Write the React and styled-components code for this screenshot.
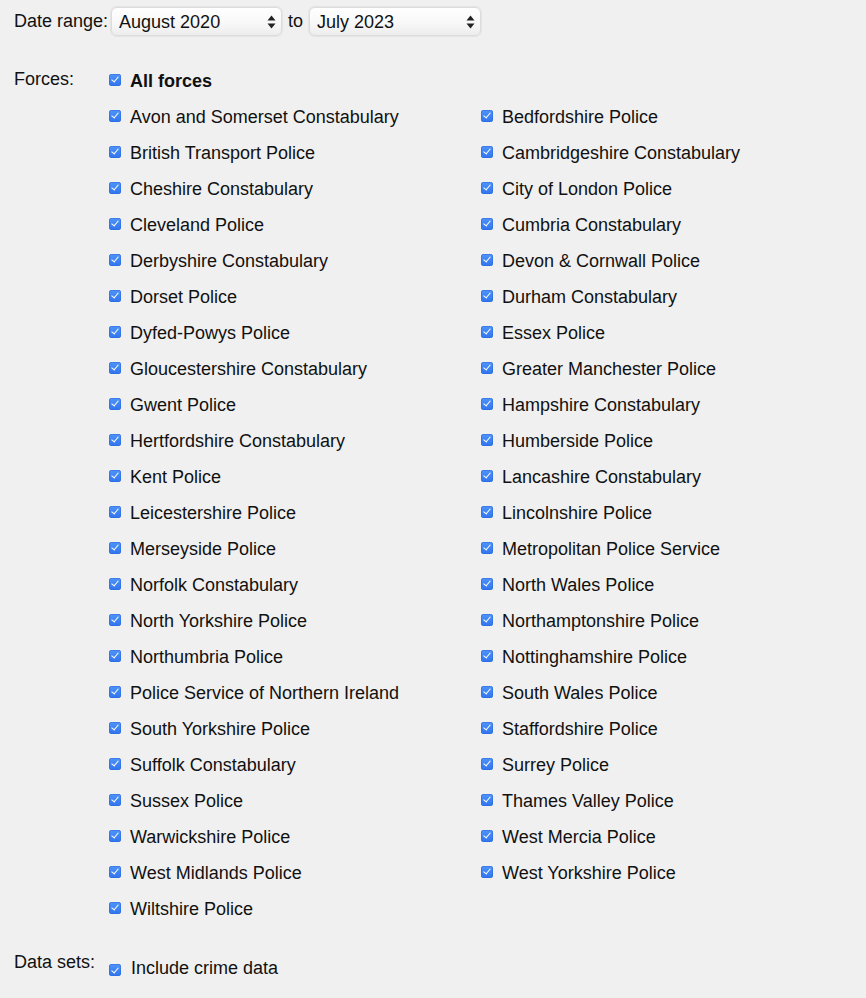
import React from "react";
import styled, { createGlobalStyle } from "styled-components";

const Global = createGlobalStyle`
  html, body { margin: 0; padding: 0; background: #f0f0f0; }
  body { font-family: "Liberation Sans", Arial, Helvetica, sans-serif; font-size: 18px; color: #111; }
`;

const Page = styled.div`
  padding: 7px 0 12px 14px;
  width: 852px;
  min-height: 979px;
  background: #f0f0f0;
`;

const DateRow = styled.div`
  display: flex;
  align-items: center;
  height: 29px;
`;

const InlineLabel = styled.span`
  margin-right: ${(p) => p.$mr || 0}px;
  margin-left: ${(p) => p.$ml || 0}px;
`;

const SelectWrap = styled.div`
  position: relative;
  width: ${(p) => p.$w}px;
  height: 29px;
`;

const Select = styled.select`
  appearance: none;
  -webkit-appearance: none;
  width: 100%;
  height: 100%;
  box-sizing: border-box;
  border: 1px solid #dcdcdc;
  border-radius: 6px;
  background: linear-gradient(#ffffff, #f8f8f8 55%, #ededed);
  box-shadow: 0 0 1px 1px #e4e4e4, inset 0 1px 0 #fff;
  font: inherit;
  font-size: 18px;
  color: #111;
  padding: 0 26px 0 7px;
  outline: none;
`;

const Arrows = styled.svg`
  position: absolute;
  right: 6px;
  top: 8px;
  width: 9px;
  height: 14px;
  pointer-events: none;
`;

const Section = styled.div`
  display: grid;
  grid-template-columns: 95px 1fr;
  margin-top: ${(p) => p.$mt}px;
`;

const SectionLabel = styled.div`
  line-height: 20px;
  padding-top: ${(p) => p.$pt}px;
`;

const Options = styled.div`
  display: grid;
  grid-template-columns: 372px 372px;
`;

const Row = styled.label`
  display: flex;
  align-items: center;
  height: 36px;
  grid-column: ${(p) => (p.$full ? "1 / -1" : "auto")};
  font-weight: ${(p) => (p.$bold ? 700 : 400)};
  white-space: nowrap;
`;

const Box = styled.input.attrs({ type: "checkbox" })`
  appearance: none;
  -webkit-appearance: none;
  margin: ${(p) => (p.$mt === undefined ? -3 : p.$mt)}px ${(p) => p.$gap || 9}px 0 0;
  width: 12px;
  height: 12px;
  flex: none;
  border-radius: 3px;
  background: linear-gradient(#5094f8, #2f74ee);
  box-shadow: inset 0 0 0 0.5px #2a68d8;
  position: relative;
  &::after {
    content: "";
    position: absolute;
    left: 4px;
    top: 1.5px;
    width: 3px;
    height: 6px;
    border: solid #fff;
    border-width: 0 1.6px 1.6px 0;
    transform: rotate(40deg);
  }
`;

const forces = [
  ["Avon and Somerset Constabulary", "Bedfordshire Police"],
  ["British Transport Police", "Cambridgeshire Constabulary"],
  ["Cheshire Constabulary", "City of London Police"],
  ["Cleveland Police", "Cumbria Constabulary"],
  ["Derbyshire Constabulary", "Devon & Cornwall Police"],
  ["Dorset Police", "Durham Constabulary"],
  ["Dyfed-Powys Police", "Essex Police"],
  ["Gloucestershire Constabulary", "Greater Manchester Police"],
  ["Gwent Police", "Hampshire Constabulary"],
  ["Hertfordshire Constabulary", "Humberside Police"],
  ["Kent Police", "Lancashire Constabulary"],
  ["Leicestershire Police", "Lincolnshire Police"],
  ["Merseyside Police", "Metropolitan Police Service"],
  ["Norfolk Constabulary", "North Wales Police"],
  ["North Yorkshire Police", "Northamptonshire Police"],
  ["Northumbria Police", "Nottinghamshire Police"],
  ["Police Service of Northern Ireland", "South Wales Police"],
  ["South Yorkshire Police", "Staffordshire Police"],
  ["Suffolk Constabulary", "Surrey Police"],
  ["Sussex Police", "Thames Valley Police"],
  ["Warwickshire Police", "West Mercia Police"],
  ["West Midlands Police", "West Yorkshire Police"],
  ["Wiltshire Police"],
].flat();

function DateSelect({ w, value, options }) {
  return (
    <SelectWrap $w={w}>
      <Select defaultValue={value}>
        {options.map((o) => (
          <option key={o}>{o}</option>
        ))}
      </Select>
      <Arrows viewBox="0 0 9 14">
        <path d="M4.5 0.5 L8.5 5.5 L0.5 5.5 Z" fill="#222" />
        <path d="M4.5 13.5 L8.5 8.5 L0.5 8.5 Z" fill="#222" />
      </Arrows>
    </SelectWrap>
  );
}

export default function App() {
  return (
    <Page>
      <Global />
      <DateRow>
        <InlineLabel $mr={3}>Date range:</InlineLabel>
        <DateSelect w={171} value="August 2020" options={["August 2020", "September 2020"]} />
        <InlineLabel $ml={6} $mr={6}>to</InlineLabel>
        <DateSelect w={172} value="July 2023" options={["June 2023", "July 2023"]} />
      </DateRow>

      <Section $mt={27}>
        <SectionLabel $pt={6}>Forces:</SectionLabel>
        <Options>
          <Row $full $bold>
            <Box defaultChecked />
            All forces
          </Row>
          {forces.map((f) => (
            <Row key={f}>
              <Box defaultChecked />
              {f}
            </Row>
          ))}
        </Options>
      </Section>

      <Section $mt={23}>
        <SectionLabel $pt={2}>Data sets:</SectionLabel>
        <Options>
          <Row $full>
            <Box defaultChecked $mt={4} $gap={10} />
            Include crime data
          </Row>
        </Options>
      </Section>
    </Page>
  );
}
